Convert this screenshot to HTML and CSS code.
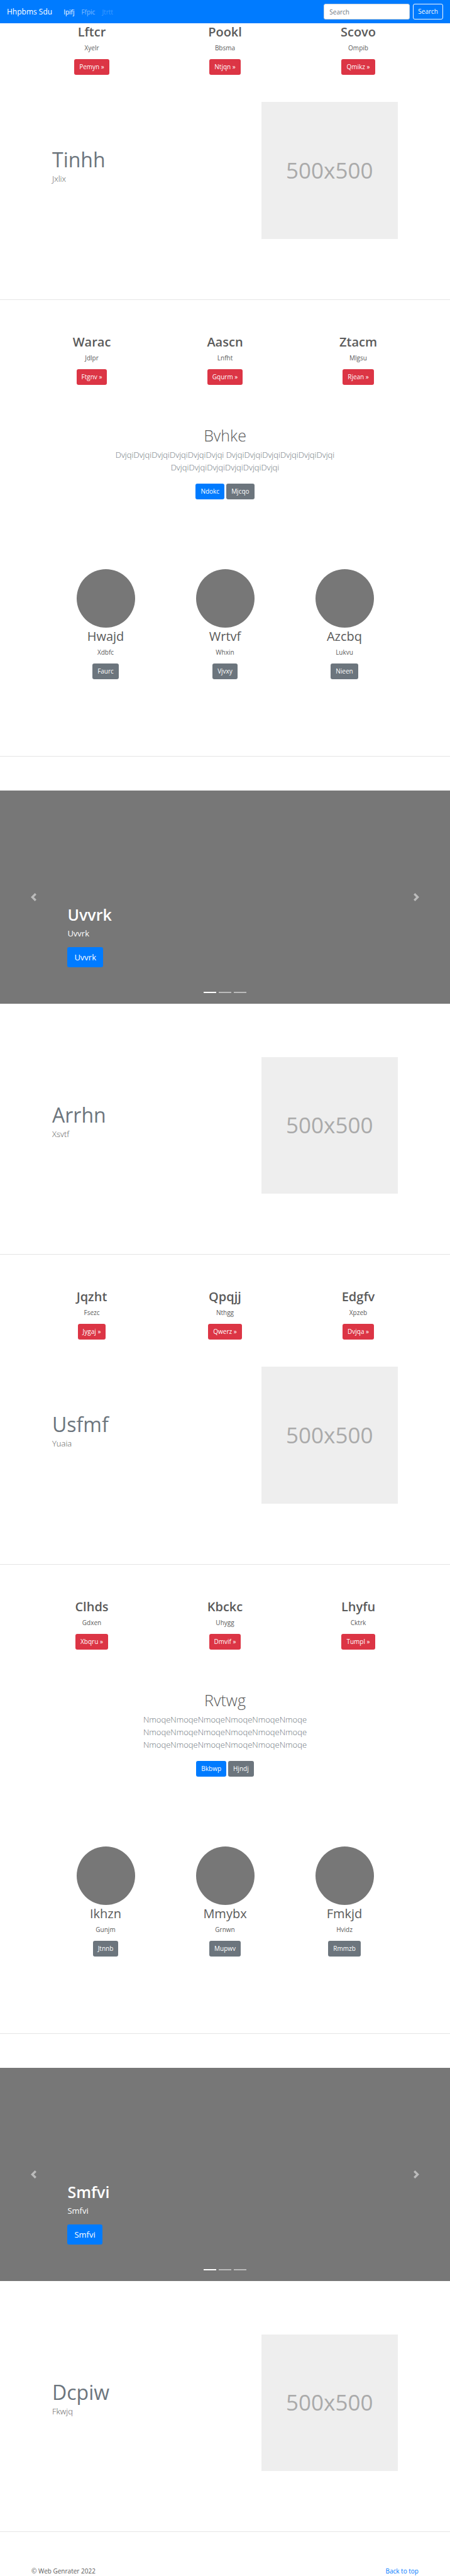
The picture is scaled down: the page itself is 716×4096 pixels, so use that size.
FILE: index.html
```html
<!DOCTYPE html>
<html lang="en">
<head>
<meta charset="utf-8">
<meta name="viewport" content="width=device-width, initial-scale=1">
<title>Hhpbms Sdu</title>
<link rel="stylesheet" href="styles.css">
</head>
<body>
<header class="navbar" id="top">
  <a class="brand" href="#">Hhpbms Sdu</a>
  <nav class="nav-links">
    <a class="nav-link active" href="#">Ipifj</a>
    <a class="nav-link" href="#">Ffpic</a>
    <a class="nav-link disabled" href="#">Jtrtt</a>
  </nav>
  <form class="search">
    <input class="search-input" type="text" placeholder="Search" aria-label="Search">
    <button class="btn btn-outline" type="button">Search</button>
  </form>
</header>

<main>
  <section class="cards cards-first">
    <div class="card"><h2>Lftcr</h2><p>Xyelr</p><a class="btn btn-danger" href="#">Pemyn »</a></div>
    <div class="card"><h2>Pookl</h2><p>Bbsma</p><a class="btn btn-danger" href="#">Ntjqn »</a></div>
    <div class="card"><h2>Scovo</h2><p>Ompib</p><a class="btn btn-danger" href="#">Qmikz »</a></div>
  </section>

  <section class="featurette">
    <div class="feature-text"><h2>Tinhh</h2><p>Jxlix</p></div>
    <div class="feature-media"><div class="placeholder">500x500</div></div>
  </section>
  <hr class="divider">

  <section class="cards">
    <div class="card"><h2>Warac</h2><p>Jdlpr</p><a class="btn btn-danger" href="#">Ftgnv »</a></div>
    <div class="card"><h2>Aascn</h2><p>Lnfht</p><a class="btn btn-danger" href="#">Gqurm »</a></div>
    <div class="card"><h2>Ztacm</h2><p>Mlgsu</p><a class="btn btn-danger" href="#">Rjean »</a></div>
  </section>

  <section class="intro">
    <h1>Bvhke</h1>
    <p>DvjqiDvjqiDvjqiDvjqiDvjqiDvjqi DvjqiDvjqiDvjqiDvjqiDvjqiDvjqi DvjqiDvjqiDvjqiDvjqiDvjqiDvjqi</p>
    <div class="actions"><a class="btn btn-primary" href="#">Ndokc</a><a class="btn btn-secondary" href="#">Mjcqo</a></div>
  </section>

  <section class="people">
    <div class="person"><div class="avatar"></div><h2>Hwajd</h2><p>Xdbfc</p><a class="btn btn-secondary" href="#">Faurc</a></div>
    <div class="person"><div class="avatar"></div><h2>Wrtvf</h2><p>Whxin</p><a class="btn btn-secondary" href="#">Vjvxy</a></div>
    <div class="person"><div class="avatar"></div><h2>Azcbq</h2><p>Lukvu</p><a class="btn btn-secondary" href="#">Nieen</a></div>
  </section>
  <hr class="divider">

  <section class="carousel">
    <div class="caption"><h1>Uvvrk</h1><p>Uvvrk</p><a class="btn btn-primary btn-lg" href="#">Uvvrk</a></div>
    <button class="control prev" type="button" aria-label="Previous"><svg viewBox="0 0 8 8"><path d="M5.25 0l-4 4 4 4 1.5-1.5L4.25 4l2.5-2.5L5.25 0z"/></svg></button>
    <button class="control next" type="button" aria-label="Next"><svg viewBox="0 0 8 8"><path d="M2.75 0l-1.5 1.5L3.75 4l-2.5 2.5L2.75 8l4-4-4-4z"/></svg></button>
    <div class="indicators"><span class="on"></span><span></span><span></span></div>
  </section>

  <section class="featurette">
    <div class="feature-text"><h2>Arrhn</h2><p>Xsvtf</p></div>
    <div class="feature-media"><div class="placeholder">500x500</div></div>
  </section>
  <hr class="divider">

  <section class="cards">
    <div class="card"><h2>Jqzht</h2><p>Fsezc</p><a class="btn btn-danger" href="#">Jygaj »</a></div>
    <div class="card"><h2>Qpqjj</h2><p>Nthgg</p><a class="btn btn-danger" href="#">Qwerz »</a></div>
    <div class="card"><h2>Edgfv</h2><p>Xpzeb</p><a class="btn btn-danger" href="#">Dvjqa »</a></div>
  </section>

  <section class="featurette">
    <div class="feature-text"><h2>Usfmf</h2><p>Yuaia</p></div>
    <div class="feature-media"><div class="placeholder">500x500</div></div>
  </section>
  <hr class="divider">

  <section class="cards">
    <div class="card"><h2>Clhds</h2><p>Gdxen</p><a class="btn btn-danger" href="#">Xbqru »</a></div>
    <div class="card"><h2>Kbckc</h2><p>Uhygg</p><a class="btn btn-danger" href="#">Dmvif »</a></div>
    <div class="card"><h2>Lhyfu</h2><p>Cktrk</p><a class="btn btn-danger" href="#">Tumpl »</a></div>
  </section>

  <section class="intro">
    <h1>Rvtwg</h1>
    <p>NmoqeNmoqeNmoqeNmoqeNmoqeNmoqe NmoqeNmoqeNmoqeNmoqeNmoqeNmoqe NmoqeNmoqeNmoqeNmoqeNmoqeNmoqe</p>
    <div class="actions"><a class="btn btn-primary" href="#">Bkbwp</a><a class="btn btn-secondary" href="#">Hjndj</a></div>
  </section>

  <section class="people">
    <div class="person"><div class="avatar"></div><h2>Ikhzn</h2><p>Gunjm</p><a class="btn btn-secondary" href="#">Jtnnb</a></div>
    <div class="person"><div class="avatar"></div><h2>Mmybx</h2><p>Grnwn</p><a class="btn btn-secondary" href="#">Mupwv</a></div>
    <div class="person"><div class="avatar"></div><h2>Fmkjd</h2><p>Hvidz</p><a class="btn btn-secondary" href="#">Rmmzb</a></div>
  </section>
  <hr class="divider">

  <section class="carousel">
    <div class="caption"><h1>Smfvi</h1><p>Smfvi</p><a class="btn btn-primary btn-lg" href="#">Smfvi</a></div>
    <button class="control prev" type="button" aria-label="Previous"><svg viewBox="0 0 8 8"><path d="M5.25 0l-4 4 4 4 1.5-1.5L4.25 4l2.5-2.5L5.25 0z"/></svg></button>
    <button class="control next" type="button" aria-label="Next"><svg viewBox="0 0 8 8"><path d="M2.75 0l-1.5 1.5L3.75 4l-2.5 2.5L2.75 8l4-4-4-4z"/></svg></button>
    <div class="indicators"><span class="on"></span><span></span><span></span></div>
  </section>

  <section class="featurette">
    <div class="feature-text"><h2>Dcpiw</h2><p>Fkwjq</p></div>
    <div class="feature-media"><div class="placeholder">500x500</div></div>
  </section>
  <hr class="divider">
</main>

<footer class="footer">
  <span>© Web Genrater 2022</span>
  <a href="#top">Back to top</a>
</footer>
</body>
</html>
```
FILE: styles.css
```css
* {
  box-sizing: border-box;
}

body {
  margin: 0;
  background: #fff;
  color: #5a5a5a;
  font: 10px/16px "Open Sans", "Noto Sans", sans-serif;
}

h1,
h2,
p {
  margin: 0;
}

a {
  color: #007bff;
  text-decoration: none;
}

/* Navigation bar */
.navbar {
  display: flex;
  align-items: center;
  height: 37px;
  padding: 0 11px;
  background: #007bff;
}

.brand {
  margin-right: 18px;
  color: #fff;
  font-size: 12px;
}

.nav-links {
  display: flex;
  flex: 1;
  gap: 11px;
}

.nav-link {
  color: rgba(255, 255, 255, 0.5);
}

.nav-link.active {
  color: #fff;
}

.nav-link.disabled {
  color: rgba(255, 255, 255, 0.25);
}

.search {
  display: flex;
  gap: 5px;
}

.search-input {
  width: 137px;
  height: 25px;
  padding: 0 8px;
  border: 1px solid #ced4da;
  border-radius: 3px;
  background: #fff;
  color: #495057;
  font: inherit;
}

.search-input::placeholder {
  color: #6c757d;
  opacity: 1;
}

/* Buttons */
.btn {
  display: inline-block;
  height: 25px;
  padding: 0 7px;
  border: 1px solid transparent;
  border-radius: 3px;
  color: #fff;
  font: 10px/23px "Open Sans", "Noto Sans", sans-serif;
}

.btn-danger {
  background: #dc3545;
}

.btn-primary {
  background: #007bff;
}

.btn-secondary {
  background: #6c757d;
}

.btn-outline {
  border-color: #f8f9fa;
  background: transparent;
  color: #f8f9fa;
}

.btn-lg {
  height: 32px;
  padding: 0 10px;
  font-size: 13px;
  line-height: 30px;
}

/* Three-column blocks */
.cards,
.people {
  display: grid;
  grid-template-columns: repeat(3, 1fr);
  text-align: center;
}

.cards {
  margin: 0 40px;
}

.cards-first {
  margin-top: 1px;
}

.people {
  margin: 111px 73px 0;
}

.card,
.person {
  display: flex;
  flex-direction: column;
  align-items: center;
}

.card h2,
.person h2 {
  margin-bottom: 5px;
  font-size: 20px;
  line-height: 25px;
}

.card h2 {
  font-weight: 600;
}

.person h2 {
  font-weight: 400;
}

.card p,
.person p {
  margin-bottom: 10px;
}

.avatar {
  width: 93px;
  height: 93px;
  margin-bottom: 1px;
  border-radius: 50%;
  background: #777;
}

/* Featurettes */
.featurette {
  display: grid;
  grid-template-columns: 7fr 5fr;
  margin: 0 73px;
}

.cards + .featurette {
  margin-top: 43px;
}

.carousel + .featurette {
  margin-top: 85px;
}

.feature-text {
  padding: 72px 10px 0;
}

.feature-text h2 {
  color: #6c757d;
  font-size: 32px;
  font-weight: 400;
  line-height: 40px;
}

.feature-text p {
  font-size: 13px;
  font-weight: 300;
  line-height: 20px;
}

.feature-media {
  padding: 0 10px;
}

.placeholder {
  display: flex;
  align-items: center;
  justify-content: center;
  aspect-ratio: 1;
  background: #eee;
  color: #aaa;
  font-size: 35px;
  line-height: 40px;
}

.divider {
  height: 1px;
  margin: 96px 0 54px;
  border: 0;
  background: #e5e5e5;
}

.people + .divider {
  margin-top: 122px;
}

/* Centred introduction */
.intro {
  max-width: 424px;
  margin: 64px auto 0;
  text-align: center;
}

.intro h1 {
  margin-bottom: 5px;
  font-size: 25px;
  font-weight: 300;
  line-height: 32px;
}

.intro p {
  margin-bottom: 16px;
  color: #6c757d;
  font-size: 13px;
  font-weight: 300;
  line-height: 20px;
}

.actions {
  display: flex;
  justify-content: center;
  gap: 3px;
}

/* Carousel */
.carousel {
  position: relative;
  display: flex;
  flex-direction: column;
  justify-content: flex-end;
  min-height: 339px;
  padding: 0 15% 58px;
  background: #777;
  color: #fff;
}

.caption h1 {
  margin-bottom: 4px;
  font-size: 25px;
  font-weight: 600;
  line-height: 32px;
}

.caption p {
  margin-bottom: 12px;
  font-size: 13px;
  line-height: 20px;
}

.caption .btn {
  vertical-align: top;
}

.control {
  position: absolute;
  top: 0;
  bottom: 0;
  display: flex;
  align-items: center;
  justify-content: center;
  width: 15%;
  padding: 0;
  border: 0;
  background: none;
  opacity: 0.5;
}

.prev {
  left: 0;
}

.next {
  right: 0;
}

.control svg {
  width: 13px;
  height: 13px;
  fill: #fff;
}

.indicators {
  position: absolute;
  right: 0;
  bottom: 17px;
  left: 0;
  display: flex;
  justify-content: center;
  gap: 4px;
}

.indicators span {
  width: 20px;
  height: 2px;
  background: rgba(255, 255, 255, 0.5);
}

.indicators .on {
  background: #fff;
}

.footer {
  display: flex;
  justify-content: space-between;
  padding: 0 50px;
}
```
